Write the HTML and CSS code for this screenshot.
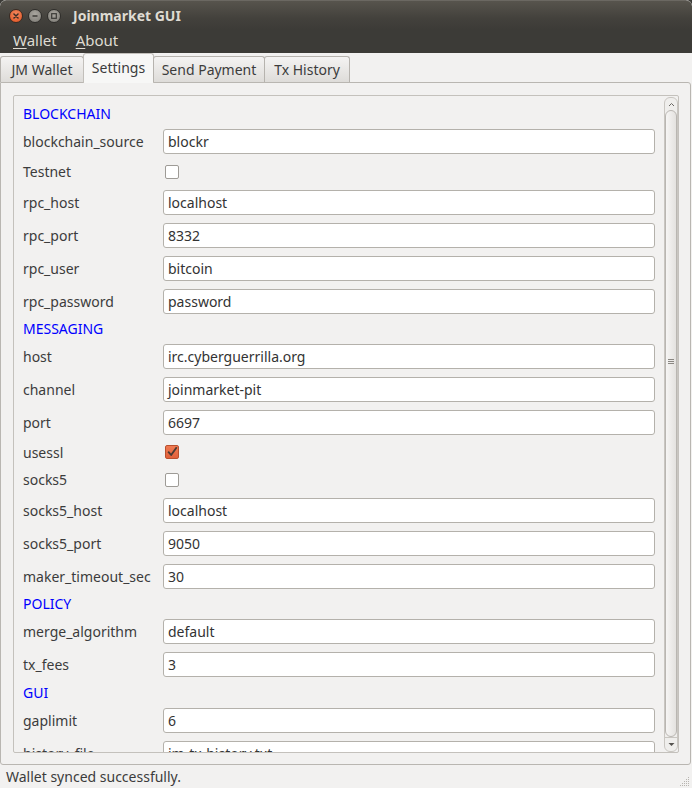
FILE: index.html
```html
<!DOCTYPE html>
<html>
<head>
<meta charset="utf-8">
<link rel="stylesheet" href="styles.css">
</head>
<body>
<div class="window">
  <div class="titlebar">
    <div class="wbtns">
      <span class="wbtn close"><svg width="13" height="13" viewBox="0 0 13 13"><path d="M4.3 4.3 L8.7 8.7 M8.7 4.3 L4.3 8.7" stroke="#3a2a22" stroke-width="1.6" stroke-linecap="round"/></svg></span>
      <span class="wbtn"><svg width="13" height="13" viewBox="0 0 13 13"><path d="M3.8 6.5 H9.2" stroke="#3c3b37" stroke-width="1.6"/></svg></span>
      <span class="wbtn"><svg width="13" height="13" viewBox="0 0 13 13"><rect x="4" y="4" width="5" height="5" fill="none" stroke="#3c3b37" stroke-width="1.3"/></svg></span>
    </div>
    <div class="title">Joinmarket GUI</div>
  </div>
  <div class="menubar">
    <span class="menu"><u>W</u>allet</span>
    <span class="menu"><u>A</u>bout</span>
  </div>
  <div class="tabbar">
    <div class="tab t1">JM Wallet</div>
    <div class="tab active t2">Settings</div>
    <div class="tab t3">Send Payment</div>
    <div class="tab t4">Tx History</div>
  </div>
  <div class="pane">
    <div class="scrollframe">
      <div class="content">
        <div class="form">
          <div class="row heading">BLOCKCHAIN</div>
          <div class="row"><span class="lbl">blockchain_source</span><span class="input">blockr</span></div>
          <div class="row cbrow"><span class="lbl">Testnet</span><span class="cb"></span></div>
          <div class="row"><span class="lbl">rpc_host</span><span class="input">localhost</span></div>
          <div class="row"><span class="lbl">rpc_port</span><span class="input">8332</span></div>
          <div class="row"><span class="lbl">rpc_user</span><span class="input">bitcoin</span></div>
          <div class="row"><span class="lbl">rpc_password</span><span class="input">password</span></div>
          <div class="row heading">MESSAGING</div>
          <div class="row"><span class="lbl">host</span><span class="input">irc.cyberguerrilla.org</span></div>
          <div class="row"><span class="lbl">channel</span><span class="input">joinmarket-pit</span></div>
          <div class="row"><span class="lbl">port</span><span class="input">6697</span></div>
          <div class="row cbrow"><span class="lbl">usessl</span><span class="cb checked"><svg width="14" height="14" viewBox="0 0 14 14"><path d="M2.5 6.5 L6 10.5 L12.5 1.5" fill="none" stroke="#4a3a33" stroke-width="2.2" stroke-linejoin="round"/></svg></span></div>
          <div class="row cbrow"><span class="lbl">socks5</span><span class="cb"></span></div>
          <div class="row"><span class="lbl">socks5_host</span><span class="input">localhost</span></div>
          <div class="row"><span class="lbl">socks5_port</span><span class="input">9050</span></div>
          <div class="row"><span class="lbl">maker_timeout_sec</span><span class="input">30</span></div>
          <div class="row heading">POLICY</div>
          <div class="row"><span class="lbl">merge_algorithm</span><span class="input">default</span></div>
          <div class="row"><span class="lbl">tx_fees</span><span class="input">3</span></div>
          <div class="row heading gui">GUI</div>
          <div class="row"><span class="lbl">gaplimit</span><span class="input">6</span></div>
          <div class="row"><span class="lbl">history_file</span><span class="input">jm-tx-history.txt</span></div>
        </div>
      </div>
      <div class="scrollbar">
        <div class="sb-up"><svg width="7" height="5" viewBox="0 0 7 5"><path d="M1 4 L3.5 1.5 L6 4" fill="none" stroke="#6a6864" stroke-width="1"/></svg></div>
        <div class="sb-thumb"><svg class="sb-grip" width="6" height="6" viewBox="0 0 6 6"><path d="M0 0.5 H6 M0 2.5 H6 M0 4.5 H6" stroke="#8a8782" stroke-width="1"/></svg></div>
        <div class="sb-down"><svg width="7" height="5" viewBox="0 0 7 5"><path d="M0.5 1 H6.5 L3.5 4 Z" fill="#55534f"/></svg></div>
      </div>
    </div>
  </div>
  <div class="statusbar">
    <span class="status">Wallet synced successfully.</span>
    <svg class="grip" width="11" height="11" viewBox="0 0 11 11">
      <g fill="#b8b5b0">
        <rect x="9" y="1" width="1" height="1"/>
        <rect x="7" y="3" width="1" height="1"/><rect x="9" y="3" width="1" height="1"/>
        <rect x="5" y="5" width="1" height="1"/><rect x="7" y="5" width="1" height="1"/><rect x="9" y="5" width="1" height="1"/>
        <rect x="3" y="7" width="1" height="1"/><rect x="5" y="7" width="1" height="1"/><rect x="7" y="7" width="1" height="1"/><rect x="9" y="7" width="1" height="1"/>
        <rect x="1" y="9" width="1" height="1"/><rect x="3" y="9" width="1" height="1"/><rect x="5" y="9" width="1" height="1"/><rect x="7" y="9" width="1" height="1"/><rect x="9" y="9" width="1" height="1"/>
      </g>
    </svg>
  </div>
</div>
</body>
</html>
```

FILE: styles.css
```css
* { box-sizing: border-box; }
html, body { margin: 0; padding: 0; }
body {
  width: 692px;
  height: 788px;
  overflow: hidden;
  background: #3c3b37;
  font-family: "Noto Sans", "Open Sans", sans-serif;
  font-size: 14px;
  color: #3c3c3c;
}
.window {
  width: 692px;
  height: 788px;
  display: flex;
  flex-direction: column;
  background: #f2f1f0;
  border-radius: 6px 6px 0 0;
  overflow: hidden;
}
.titlebar {
  height: 30px;
  flex: none;
  display: flex;
  align-items: center;
  background: linear-gradient(#57544d, #43413c 60%, #3c3b37);
  border-top: 1px solid #6b6862;
  border-radius: 6px 6px 0 0;
}
.wbtns {
  display: flex;
  gap: 5px;
  margin-left: 9px;
  width: 64px;
}
.wbtn {
  width: 14px;
  height: 14px;
  border-radius: 50%;
  background: radial-gradient(circle at 50% 35%, #a9a69f, #7c7a74);
  border: 1px solid #2f2e2b;
  display: flex;
  align-items: center;
  justify-content: center;
}
.wbtn svg { width: 12px; height: 12px; }
.wbtn.close {
  background: radial-gradient(circle at 50% 35%, #f48a60, #e0511f);
  border-color: #3a2a22;
}
.title {
  color: #dfdbd2;
  font-weight: bold;
  font-size: 14px;
}
.menubar {
  height: 23px;
  flex: none;
  background: #3c3b37;
  display: flex;
  align-items: center;
  padding: 0 0 3px 13px;
  gap: 19px;
  color: #dfdbd2;
  font-size: 15px;
  line-height: 18px;
}
.menu u { text-underline-offset: 2px; }
.tabbar {
  height: 29px;
  flex: none;
  display: flex;
  align-items: flex-end;
  position: relative;
  z-index: 2;
}
.tab {
  height: 26px;
  padding-bottom: 1px;
  display: flex;
  align-items: center;
  justify-content: center;
  border: 1px solid #b6b3ae;
  border-bottom: none;
  border-radius: 3px 3px 0 0;
  background: linear-gradient(#f4f3f2, #dedcd9);
  color: #3c3c3c;
  margin-right: -1px;
  white-space: nowrap;
}
.t1 { width: 84px; }
.t2 { width: 71px; }
.t3 { width: 112px; }
.t4 { width: 86px; }
.tab.active {
  height: 30px;
  margin-bottom: -1px;
  background: #f7f7f6;
  padding-bottom: 3px;
  border-color: #c2bfba;
}
.pane {
  flex: 1;
  margin: 0 1px 0 0;
  border: 1px solid #b9b6b1;
  border-radius: 0 3px 3px 3px;
  padding: 12px 11px 11px 12px;
  display: flex;
  background: #f2f1f0;
  min-height: 0;
}
.scrollframe {
  flex: 1;
  border: 1px solid #c4c1bc;
  border-radius: 2px;
  display: flex;
  min-height: 0;
  overflow: hidden;
}
.content {
  flex: 1;
  overflow: hidden;
  padding: 11px 0 0 9px;
}
.form {
  display: flex;
  flex-direction: column;
  gap: 8px;
}
.row {
  display: flex;
  align-items: center;
  height: 25px;
  flex: none;
}
.row.cbrow { height: 19.5px; }
.row.heading {
  height: 14px;
  color: #0000ff;
  line-height: 14px;
}
.row.gui { margin-top: 1px; }
.lbl {
  width: 140px;
  flex: none;
  white-space: nowrap;
  color: #3c3c3c;
}
.input {
  width: 492px;
  flex: none;
  height: 25px;
  background: #ffffff;
  border: 1px solid #b4b1ab;
  border-radius: 3px;
  padding: 0 4px;
  display: flex;
  align-items: center;
  color: #333333;
}
.cb {
  width: 14px;
  height: 14px;
  margin-left: 2px;
  border: 1px solid #9e9b96;
  border-radius: 2px;
  background: #fff;
  display: flex;
  align-items: center;
  justify-content: center;
}
.cb.checked {
  background: linear-gradient(#f07a52, #e0603a);
  border-color: #b9502e;
}
.cb svg { width: 12px; height: 12px; }
.scrollbar {
  width: 14px;
  flex: none;
  margin: 1px 0 0 0;
  border: 1px solid #c9c6c1;
  border-radius: 6px;
  background: #efeeec;
  display: flex;
  flex-direction: column;
  overflow: hidden;
}
.sb-up {
  height: 12px;
  flex: none;
  display: flex;
  align-items: center;
  justify-content: center;
}
.sb-thumb {
  flex: 1;
  border: 1px solid #b9b6b1;
  border-radius: 6px;
  background: linear-gradient(90deg, #f6f5f4, #e4e2df);
  display: flex;
  flex-direction: column;
  align-items: center;
  padding-top: 248px;
}
.sb-down {
  height: 14px;
  flex: none;
  display: flex;
  align-items: center;
  justify-content: center;
  border-top: 1px solid #c9c6c1;
}
.statusbar {
  height: 23px;
  flex: none;
  display: flex;
  align-items: center;
  justify-content: space-between;
  padding: 0 2px 0 6px;
  color: #3c3c3c;
}
.grip { align-self: flex-end; margin-bottom: 1px; }
```
